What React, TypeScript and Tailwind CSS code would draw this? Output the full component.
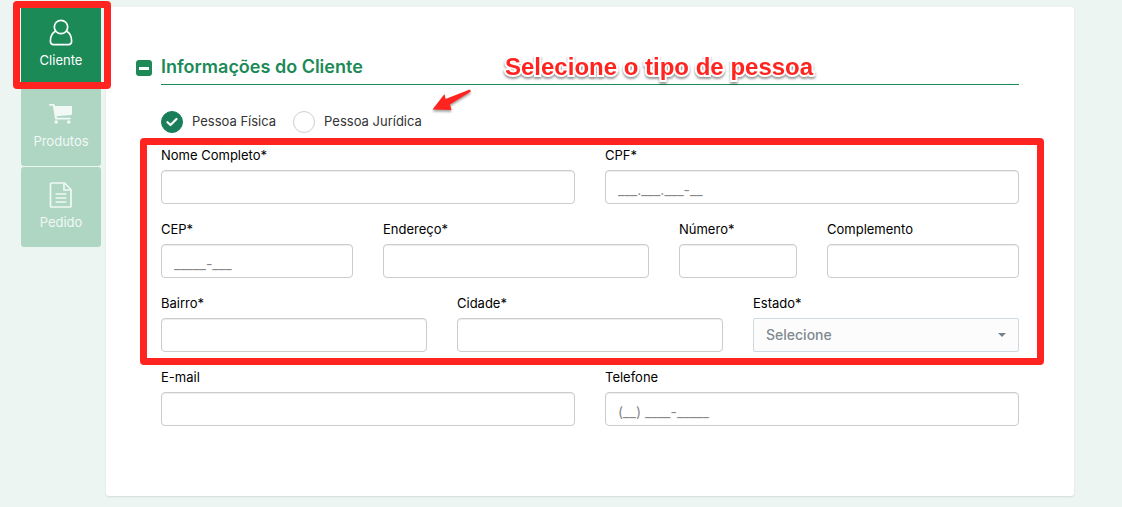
import { ReactNode, useState } from 'react'
import clsx from 'clsx'

function UserIcon() {
    return (
        <svg width="24" height="28" viewBox="0 0 24 28" fill="none" stroke="currentColor" strokeWidth="1.7">
            <circle cx="12" cy="8" r="6.7" />
            <path d="M6.8 12C3.2 13.700 1.400 17.700 1.400 22c0 2.300 1.300 3.600 3.300 3.600h14.600c2 0 3.300-1.300 3.300-3.600 0-4.300-1.800-8.300-5.400-10" />
        </svg>
    )
}

function CartIcon() {
    return (
        <svg width="24" height="28" viewBox="0 0 24 28" fill="currentColor">
            <path d="M.8 4h4c.5 0 .8.3.9.8l.2 1.1h16.200c.5 0 .9.4.9.9v7.200c0 .5-.3.8-.8.9L7.700 16.300l.3 1.500h13c.5 0 .8.4.8.8s-.3.9-.8.9H6.900c-.5 0-.8-.3-.9-.8L3.900 5.800H.8C.3 5.800 0 5.400 0 4.900S.3 4 .8 4z" />
            <circle cx="7.200" cy="22" r="1.800" />
            <circle cx="19.800" cy="22" r="1.800" />
        </svg>
    )
}

function FileIcon() {
    return (
        <svg width="24" height="28" viewBox="0 0 24 28" fill="none" stroke="currentColor" strokeWidth="1.7">
            <path d="M2 2h13.500l6.500 6.500v16.700c0 .4-.3.8-.8.8H2.300c-.5 0-.8-.3-.8-.8V2.700c0-.4.3-.7.8-.7z" />
            <path d="M15 2v7h6.800M6.500 13h10.800M6.500 17h10.800M6.500 21h10.800" />
        </svg>
    )
}

const steps = [
    { name: 'Cliente', icon: <UserIcon /> },
    { name: 'Produtos', icon: <CartIcon /> },
    { name: 'Pedido', icon: <FileIcon /> },
]

interface FieldProps {
    id: string
    label: string
    className: string
    placeholder?: string
    children?: ReactNode
}

function Field({ id, label, className, placeholder, children }: FieldProps) {
    return (
        <div className={className}>
            <label htmlFor={id} className="mb-1.5 block text-[13px] leading-[18px] text-black">
                {label}
            </label>
            {children ?? (
                <input
                    id={id}
                    type="text"
                    placeholder={placeholder}
                    className="block h-[34px] w-full rounded border border-[#ccc] bg-white px-3 pt-1 text-sm text-[#555] shadow-[inset_0_1px_1px_rgba(0,0,0,0.075)] outline-none placeholder:text-[#888]"
                />
            )}
        </div>
    )
}

interface PersonOptionProps {
    label: string
    checked: boolean
    onSelect: () => void
}

function PersonOption({ label, checked, onSelect }: PersonOptionProps) {
    return (
        <label className="flex items-start gap-[9px] text-[13px] leading-5 text-[#333]">
            <span className="grid size-[22px] place-items-center">
                <input
                    type="radio"
                    name="pessoa"
                    checked={checked}
                    onChange={onSelect}
                    className="col-start-1 row-start-1 size-[22px] appearance-none rounded-full border border-[#d2d0c8] bg-white checked:border-[#1b7e5a] checked:bg-[#1b7e5a]"
                />
                {checked && (
                    <svg
                        className="pointer-events-none col-start-1 row-start-1"
                        width="12"
                        height="10"
                        viewBox="0 0 12 10"
                        fill="none"
                        stroke="white"
                        strokeWidth="2.2"
                        strokeLinecap="round"
                        strokeLinejoin="round"
                    >
                        <path d="M1.500 5.200 4.500 8l6-6" />
                    </svg>
                )}
            </span>
            {label}
        </label>
    )
}

export default function App() {
    const [step, setStep] = useState('Cliente')
    const [person, setPerson] = useState('fisica')
    const [open, setOpen] = useState(true)

    return (
        <div className="flex min-h-screen items-start gap-[5px] bg-[#ecf5f2] pt-[5px] pr-12 pb-[10px] pl-[21px] font-['Inter','Liberation_Sans',sans-serif]">
            {/* Steps */}
            <nav className="relative flex w-20 shrink-0 flex-col gap-px">
                {steps.map(({ name, icon }) => (
                    <button
                        key={name}
                        type="button"
                        onClick={() => setStep(name)}
                        className={clsx(
                            'flex h-20 flex-col items-center gap-1 rounded-[3px] pt-[14px] text-[13px] leading-[18px]',
                            step === name ? 'bg-[#1b8a57] text-white' : 'bg-[#afd6c3] text-[#f1f8f5]'
                        )}
                    >
                        {icon}
                        {name}
                    </button>
                ))}
                <div className="pointer-events-none absolute -top-1 -right-[10px] -left-2 h-[88px] rounded-[4px] border-[7px] border-[#ff2420]" />
            </nav>

            {/* Form */}
            <main className="mt-[2px] flex-1 rounded-[3px] bg-white px-[55px] pt-12 pb-[70px] shadow-[0_1px_2px_rgba(0,0,0,0.1)]">
                <header className="relative -ml-[25px] flex items-start gap-[9px]">
                    <button
                        type="button"
                        aria-label="Recolher"
                        aria-expanded={open}
                        onClick={() => setOpen(!open)}
                        className="mt-[5px] flex size-4 items-center justify-center rounded-[3px] bg-[#1b8a57]"
                    >
                        <span className="h-[3px] w-[10px] bg-white" />
                    </button>
                    <h2 className="flex-1 border-b border-[#1b8a57] pb-[5px] text-lg leading-6 font-semibold text-[#1b8a57]">
                        Informações do Cliente
                    </h2>
                    <p className="absolute top-0 left-[369px] font-['Liberation_Sans',sans-serif] text-2xl leading-6 font-bold whitespace-nowrap text-[#ff2420] [paint-order:stroke_fill] [-webkit-text-stroke:4px_white] [filter:drop-shadow(0_2px_1px_rgba(0,0,0,0.4))]">
                        Selecione o tipo de pessoa
                    </p>
                </header>

                {open && (
                    <form>
                        <div className="relative mt-[26px] mb-[13px] flex gap-[17px]">
                            <PersonOption
                                label="Pessoa Física"
                                checked={person === 'fisica'}
                                onSelect={() => setPerson('fisica')}
                            />
                            <PersonOption
                                label="Pessoa Jurídica"
                                checked={person === 'juridica'}
                                onSelect={() => setPerson('juridica')}
                            />
                            <svg
                                className="pointer-events-none absolute -top-[22px] left-[270px] drop-shadow-[0_2px_1px_rgba(0,0,0,0.35)]"
                                width="42"
                                height="24"
                                viewBox="0 0 42 24"
                                fill="#ff2420"
                            >
                                <path d="M1.500 20.500 13.500 5 14.500 10 37.500 1C39.500.3 40.500 2.300 38.800 3.300L19 15.500 20.500 21z" />
                            </svg>
                        </div>

                        <div className="relative grid grid-cols-12 gap-x-[30px] gap-y-4">
                            <Field id="nome" label="Nome Completo*" className="col-span-6" />
                            <Field id="cpf" label="CPF*" className="col-span-6" placeholder="___.___.___-__" />
                            <Field id="cep" label="CEP*" className="col-span-3" placeholder="_____-___" />
                            <Field id="endereco" label="Endereço*" className="col-span-4" />
                            <Field id="numero" label="Número*" className="col-span-2" />
                            <Field id="complemento" label="Complemento" className="col-span-3" />
                            <Field id="bairro" label="Bairro*" className="col-span-4" />
                            <Field id="cidade" label="Cidade*" className="col-span-4" />
                            <Field id="estado" label="Estado*" className="col-span-4">
                                <div className="grid items-center">
                                    <select
                                        id="estado"
                                        className="col-start-1 row-start-1 h-[34px] w-full appearance-none rounded-[2px] border border-[#cfd9e0] bg-[#fcfcfc] px-3 text-sm font-medium text-[#7f8a91]"
                                    >
                                        <option>Selecione</option>
                                    </select>
                                    <svg
                                        className="pointer-events-none col-start-1 row-start-1 mr-[13px] justify-self-end"
                                        width="8"
                                        height="4"
                                        viewBox="0 0 8 4"
                                        fill="#76838f"
                                    >
                                        <path d="M0 0h8L4 4z" />
                                    </svg>
                                </div>
                            </Field>
                            <div className="pointer-events-none absolute -top-2 -right-[25px] -bottom-[13px] -left-[21px] rounded-[4px] border-[7px] border-[#ff2420]" />
                        </div>

                        <div className="mt-4 grid grid-cols-12 gap-x-[30px]">
                            <Field id="email" label="E-mail" className="col-span-6" />
                            <Field id="telefone" label="Telefone" className="col-span-6" placeholder="(__) ____-_____" />
                        </div>
                    </form>
                )}
            </main>
        </div>
    )
}
